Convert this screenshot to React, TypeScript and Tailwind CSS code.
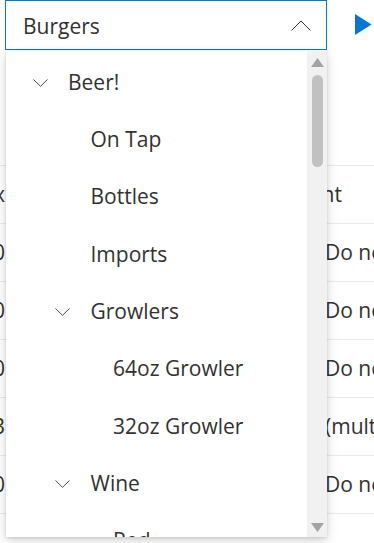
import React from "react";

type TreeNode = { label: string; level: number; expandable?: boolean };

// items of the open dropdown tree
const treeItems: TreeNode[] = [
    { label: "Beer!", level: 0, expandable: true },
    { label: "On Tap", level: 1 },
    { label: "Bottles", level: 1 },
    { label: "Imports", level: 1 },
    { label: "Growlers", level: 1, expandable: true },
    { label: "64oz Growler", level: 2 },
    { label: "32oz Growler", level: 2 },
    { label: "Wine", level: 1, expandable: true },
    { label: "Red", level: 2, expandable: true },
    { label: "Cabernet", level: 3 },
];

const tableRows = [
    { qty: "10", note: "Do not substitute" },
    { qty: "20", note: "Do not substitute" },
    { qty: "50", note: "Do not substitute" },
    { qty: "3", note: "(multiple)" },
    { qty: "40", note: "Do not substitute" },
];

const indentText = ["pl-[62px]", "pl-[84.5px]", "pl-[107px]", "pl-[129.5px]"];
const indentChevron = ["pl-[26.5px]", "pl-[49px]", "pl-[71.5px]", "pl-[94px]"];

function ChevronDown() {
    return (
        <svg width="15" height="8" viewBox="0 0 15 8" className="shrink-0">
            <path d="M0.5 0.5 L7.5 7.3 L14.5 0.5" fill="none" stroke="#4a4948" strokeWidth="1" />
        </svg>
    );
}

function TreeRow({ node }: { node: TreeNode }) {
    if (node.expandable) {
        return (
            <div className={`flex h-[57.3px] items-center ${indentChevron[node.level]}`}>
                <ChevronDown />
                <span className="ml-[20.5px] whitespace-nowrap">{node.label}</span>
            </div>
        );
    }
    return (
        <div className={`flex h-[57.3px] items-center whitespace-nowrap ${indentText[node.level]}`}>
            {node.label}
        </div>
    );
}

export default function App() {
    return (
        <div
            className="relative h-[543px] w-[374px] overflow-hidden bg-white text-[21px] text-[#323130]"
            style={{ fontFamily: "'Open Sans', 'Noto Sans', sans-serif" }}
        >
            {/* top bar: select + run */}
            <div className="flex items-start pl-[5px]">
                <div className="flex h-[50px] w-[322px] items-center justify-between border border-[#0078d4] pl-[17px] pr-[15px]">
                    <span className="pt-[3px]">Burgers</span>
                    <svg width="20" height="11" viewBox="0 0 20 11">
                        <path d="M0.5 10.5 L10 1 L19.5 10.5" fill="none" stroke="#323130" strokeWidth="1" />
                    </svg>
                </div>
                <svg width="17" height="21" viewBox="0 0 17 21" className="ml-[28px] mt-[14px]">
                    <polygon points="0,0 16.5,10.5 0,21" fill="#0078d4" />
                </svg>
            </div>

            {/* grid behind the dropdown */}
            <div className="mt-[115px]">
                <div className="flex h-[59px] items-center border-y border-[#edebe9]">
                    <div className="-ml-[55px] w-[60px] shrink-0 text-right">Max</div>
                    <div className="w-[240px] shrink-0" />
                    <div className="whitespace-nowrap">Comment</div>
                </div>
                {tableRows.map((r, i) => (
                    <div key={i} className="flex h-[58px] items-center border-b border-[#edebe9]">
                        <div className="-ml-[55px] w-[60px] shrink-0 text-right">{r.qty}</div>
                        <div className="w-[320px] shrink-0" />
                        <div className="whitespace-nowrap">{r.note}</div>
                    </div>
                ))}
            </div>

            {/* dropdown panel */}
            <div className="absolute left-[6px] top-[51px] flex h-[486px] w-[321px] bg-white shadow-[0_4px_11px_rgba(0,0,0,0.16),0_1px_3px_rgba(0,0,0,0.12)]">
                <div className="flex-1 overflow-hidden pt-[3px]">
                    {treeItems.map((n) => (
                        <TreeRow key={n.label} node={n} />
                    ))}
                </div>
                <div className="flex w-[20px] shrink-0 flex-col items-center bg-[#f1f1f1]">
                    <svg width="13" height="9" viewBox="0 0 13 9" className="mt-[7px]">
                        <polygon points="6.5,0 13,9 0,9" fill="#a3a3a3" />
                    </svg>
                    <div className="mt-[8px] h-[92px] w-[11px] rounded-full bg-[#c1c1c1]" />
                    <div className="flex-1" />
                    <svg width="13" height="9" viewBox="0 0 13 9" className="mb-[5px]">
                        <polygon points="0,0 13,0 6.5,9" fill="#a3a3a3" />
                    </svg>
                </div>
            </div>
        </div>
    );
}
